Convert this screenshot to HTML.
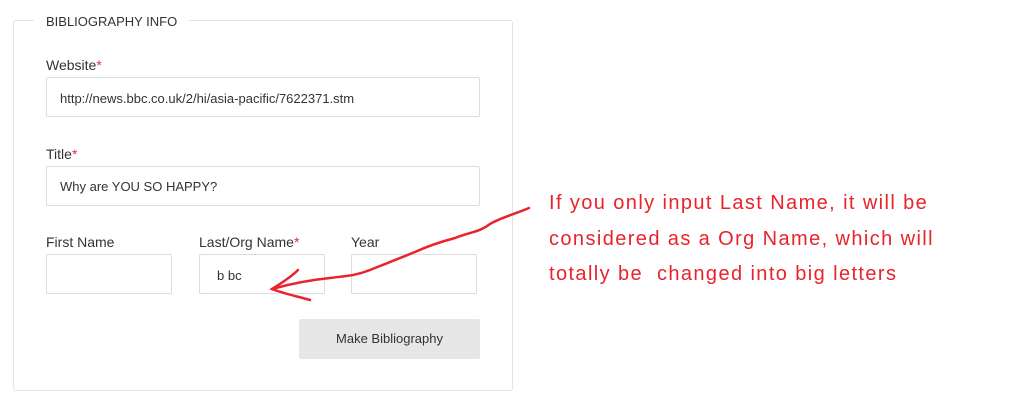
<!DOCTYPE html>
<html><head><style>
body{margin:0;width:1027px;height:401px;background:#fff;position:relative;font-family:"Liberation Sans",Arial,sans-serif;overflow:hidden}
.a{position:absolute}
.box{position:absolute;border:1px solid #ddd;border-radius:2px;box-sizing:border-box;background:#fff;font-size:13px;color:#333}
.lbl{position:absolute;font-size:14px;color:#333}
.lbl b{color:#d9304e;font-weight:normal}
.note{position:absolute;left:549px;font-size:20px;letter-spacing:1.4px;color:#e8232c;font-family:"Liberation Sans",sans-serif;white-space:nowrap}
</style></head><body>
<div class="a" style="left:13px;top:20px;width:500px;height:371px;border:1px solid #e3e3e3;border-radius:3px;box-sizing:border-box"></div>
<div class="a" style="left:34px;top:14px;padding:0 12px;background:#fff;font-size:13px;color:#333">BIBLIOGRAPHY INFO</div>
<div class="lbl" style="left:46px;top:57px">Website<b>*</b></div>
<div class="box" style="left:46px;top:77px;width:434px;height:40px;padding:13px 0 0 13px">http://news.bbc.co.uk/2/hi/asia-pacific/7622371.stm</div>
<div class="lbl" style="left:46px;top:146px">Title<b>*</b></div>
<div class="box" style="left:46px;top:166px;width:434px;height:40px;padding:12px 0 0 13px">Why are YOU SO HAPPY?</div>
<div class="lbl" style="left:46px;top:234px">First Name</div>
<div class="lbl" style="left:199px;top:234px">Last/Org Name<b>*</b></div>
<div class="lbl" style="left:351px;top:234px">Year</div>
<div class="box" style="left:46px;top:254px;width:126px;height:40px"></div>
<div class="box" style="left:199px;top:254px;width:126px;height:40px;padding:13px 0 0 17px">b bc</div>
<div class="box" style="left:351px;top:254px;width:126px;height:40px"></div>
<div class="a" style="left:299px;top:319px;width:181px;height:40px;background:#e6e6e6;border-radius:2px;font-size:13px;color:#333;text-align:center;line-height:40px">Make Bibliography</div>
<svg class="a" style="left:0;top:0" width="1027" height="401"><path d="M529 208 C515 214 500 218 490 224 C480 232 470 232 455 238 C440 242 428 246 415 252 C400 258 385 264 370 270 C355 276 345 276 330 278 C310 280 290 284 272 289" fill="none" stroke="#e8232c" stroke-width="2.5" stroke-linecap="round"/><path d="M298 270 C290 278 280 284 272 289 C285 294 296 296 310 300" fill="none" stroke="#e8232c" stroke-width="2.5" stroke-linecap="round"/></svg>
<div class="note" style="top:192px">If you only input Last Name, it will be</div>
<div class="note" style="top:228px">considered as a Org Name, which will</div>
<div class="note" style="top:263px">totally be&nbsp; changed into big letters</div>
</body></html>
